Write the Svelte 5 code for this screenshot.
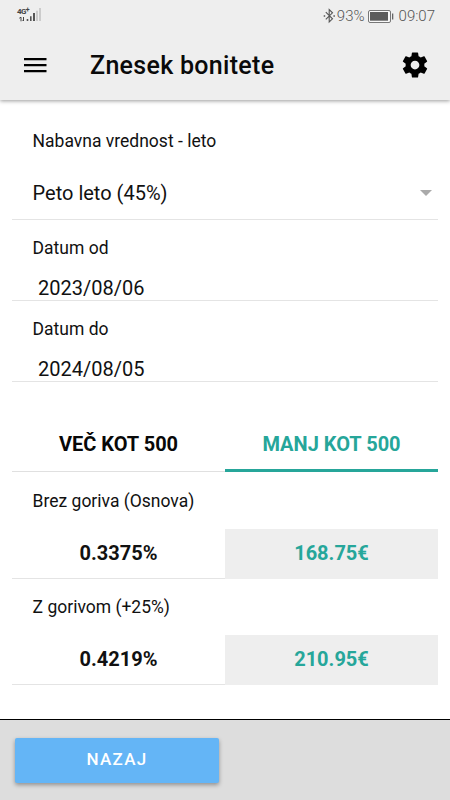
<script>
  const dates = [
    { label: 'Datum od', value: '2023/08/06' },
    { label: 'Datum do', value: '2024/08/05' }
  ];
  const tabs = ['VEČ KOT 500', 'MANJ KOT 500'];
  const results = [
    { label: 'Brez goriva (Osnova)', rate: '0.3375%', amount: '168.75€' },
    { label: 'Z gorivom (+25%)', rate: '0.4219%', amount: '210.95€' }
  ];
  let active = $state(1);
</script>

<div class="screen">
  <header>
    <div class="status">
      <div class="network">
        <span class="gen">4G<sup>+</sup></span>
        <svg width="24" height="14" viewBox="0 0 24 14">
          <path d="M2.3 10.2 4 9.2V13.3M6.5 9V13M5.5 12l1 1" fill="none" stroke="#444" stroke-width="1" />
          <path d="M9.7 11h1.6v2H9.7zM13 8.3h1.6v4.7H13zM16 5h2v8h-2z" fill="#555" />
          <path d="M19 2.8h2V13h-2zM22 0h2v13h-2z" fill="#ccc" />
        </svg>
      </div>
      <div class="device">
        <svg class="bt" width="13" height="16" viewBox="0 0 13 16">
          <path d="M2.8 4.2 9.5 10.8 6.2 14V1.5L9.5 4.8 2.8 11.4" fill="none" stroke="#555" stroke-width="1.1" />
          <path d="M.7 7.2h1.5v1.5H.7zM10.4 7.2h1.5v1.5h-1.5z" fill="#555" />
        </svg>
        <span class="percent">93%</span>
        <svg class="battery" width="26" height="13" viewBox="0 0 26 13">
          <rect x=".5" y=".5" width="22" height="12" rx="1.5" fill="#f8f8f8" stroke="#777" stroke-width="1" />
          <path d="M2 2h18v8.7H2z" fill="#5c5c5c" />
          <path d="M24 3.5h1.3v6H24z" fill="#666" />
        </svg>
        <span class="clock">09:07</span>
      </div>
    </div>
    <div class="bar">
      <svg class="menu" width="24" height="16" viewBox="0 0 24 16">
        <path d="M0 1h22.5v2.2H0zM0 7h22.5v2.2H0zM0 13h22.5v2.2H0z" />
      </svg>
      <h1>Znesek bonitete</h1>
      <svg class="gear" width="30" height="30" viewBox="0 0 24 24">
        <path d="M19.43 12.98c.04-.32.07-.64.07-.98s-.03-.66-.07-.98l2.11-1.65c.19-.15.24-.42.12-.64l-2-3.46c-.12-.22-.39-.3-.61-.22l-2.49 1c-.52-.4-1.08-.73-1.69-.98l-.38-2.65C14.46 2.18 14.25 2 14 2h-4c-.25 0-.46.18-.49.42l-.38 2.65c-.61.25-1.17.59-1.69.98l-2.49-1c-.23-.09-.49 0-.61.22l-2 3.46c-.13.22-.07.49.12.64l2.11 1.65c-.04.32-.07.65-.07.98s.03.66.07.98l-2.11 1.65c-.19.15-.24.42-.12.64l2 3.46c.12.22.39.3.61.22l2.49-1c.52.4 1.08.73 1.69.98l.38 2.65c.03.24.24.42.49.42h4c.25 0 .46-.18.49-.42l.38-2.65c.61-.25 1.17-.59 1.69-.98l2.49 1c.23.09.49 0 .61-.22l2-3.46c.12-.22.07-.49-.12-.64l-2.11-1.65zM12 15.5c-1.93 0-3.5-1.57-3.5-3.5s1.57-3.5 3.5-3.5 3.5 1.57 3.5 3.5-1.57 3.5-3.5 3.5z" />
      </svg>
    </div>
  </header>

  <main>
    <div class="label first">Nabavna vrednost - leto</div>
    <div class="select">
      <span>Peto leto (45%)</span>
      <svg width="12" height="6" viewBox="0 0 12 6"><path d="M0 0h12L6 6z" fill="#aaa" /></svg>
    </div>
    {#each dates as d}
      <div class="date">
        <div class="label">{d.label}</div>
        <div class="value">{d.value}</div>
      </div>
    {/each}

    <div class="tabs">
      {#each tabs as t, i}
        <button class:active={active === i} onclick={() => (active = i)}>{t}</button>
      {/each}
    </div>

    {#each results as r}
      <div class="result">
        <div class="label">{r.label}</div>
        <div class="cells">
          <div class="rate">{r.rate}</div>
          <div class="amount">{r.amount}</div>
        </div>
      </div>
    {/each}
  </main>

  <footer><button>NAZAJ</button></footer>
</div>

<style>
  .screen {
    width: 450px;
    height: 800px;
    display: flex;
    flex-direction: column;
    background: #fff;
    color: #111;
    font-family: Roboto, sans-serif;
    overflow: hidden;
  }
  svg { display: block; flex: none; }
  button { border: 0; margin: 0; font-family: inherit; }
  header {
    height: 100px;
    flex: none;
    background: #eee;
    box-shadow: 0 1px 4px rgba(0, 0, 0, 0.4);
  }
  .status {
    height: 32px;
    display: flex;
    justify-content: space-between;
    color: #555;
    padding: 0 15px 0 17px;
  }
  .network { padding-top: 8px; display: flex; align-items: flex-start; }
  .gen { font-size: 8px; font-weight: 700; line-height: 8px; width: 13px; margin-right: -13px; letter-spacing: -.6px; white-space: nowrap; color: #444; }
  .gen sup { font-size: 7px; line-height: 0; vertical-align: 2px; }
  .device { display: flex; align-items: center; font-size: 15px; font-weight: 300; }
  .bt { margin-right: 1px; }
  .battery { margin: 0 5px 0 3px; }
  .bar { height: 66px; display: flex; align-items: center; padding: 0 20px 0 24px; }
  h1 { margin: 0 auto 0 42px; padding-top: 2px; font-size: 25px; line-height: 30px; font-weight: 500; letter-spacing: .3px; color: #0a0a0a; }
  main { flex: none; height: 619px; padding: 0 12px; }
  .label { padding-left: 20.6px; font-size: 17.5px; line-height: 24px; }
  .label.first { padding-top: 29px; }
  .select {
    height: 67px;
    box-sizing: border-box;
    display: flex;
    justify-content: space-between;
    align-items: center;
    padding: 13px 6px 0 20.6px;
    border-bottom: 1px solid #e4e4e4;
    font-size: 20px;
  }
  .date { height: 81px; box-sizing: border-box; padding-top: 16px; border-bottom: 1px solid #e4e4e4; }
  .value { padding: 16px 0 0 26px; font-size: 20px; line-height: 25px; }
  .tabs { display: flex; height: 54px; margin-top: 36px; }
  .tabs button {
    flex: 1;
    background: none;
    padding: 0 0 2px;
    border-bottom: 1px solid #e0e0e0;
    font-size: 20px;
    font-weight: 700;
    color: #080808;
  }
  .tabs .active { padding: 0; color: #26a69a; border-bottom: 3px solid #26a69a; }
  .result { height: 106px; box-sizing: border-box; padding-top: 16.5px; }
  .cells { display: flex; height: 50px; margin-top: 16px; }
  .cells div {
    flex: 1;
    box-sizing: border-box;
    text-align: center;
    line-height: 49px;
    font-size: 20px;
    font-weight: 700;
    border-bottom: 1px solid #e4e4e4;
  }
  .cells .amount { background: #eee; color: #26a69a; border-bottom-color: #eee; }
  footer {
    flex: 1;
    box-sizing: border-box;
    border-top: 1px solid #000;
    background: #ddd;
    padding: 18px 15px;
  }
  footer button {
    display: block;
    width: 204px;
    height: 45px;
    padding: 0 0 3px;
    border-radius: 2px;
    background: #64b5f6;
    color: #fff;
    font-size: 17px;
    font-weight: 500;
    letter-spacing: 1.3px;
    box-shadow: 0 2px 4px rgba(0, 0, 0, 0.35);
  }
</style>
